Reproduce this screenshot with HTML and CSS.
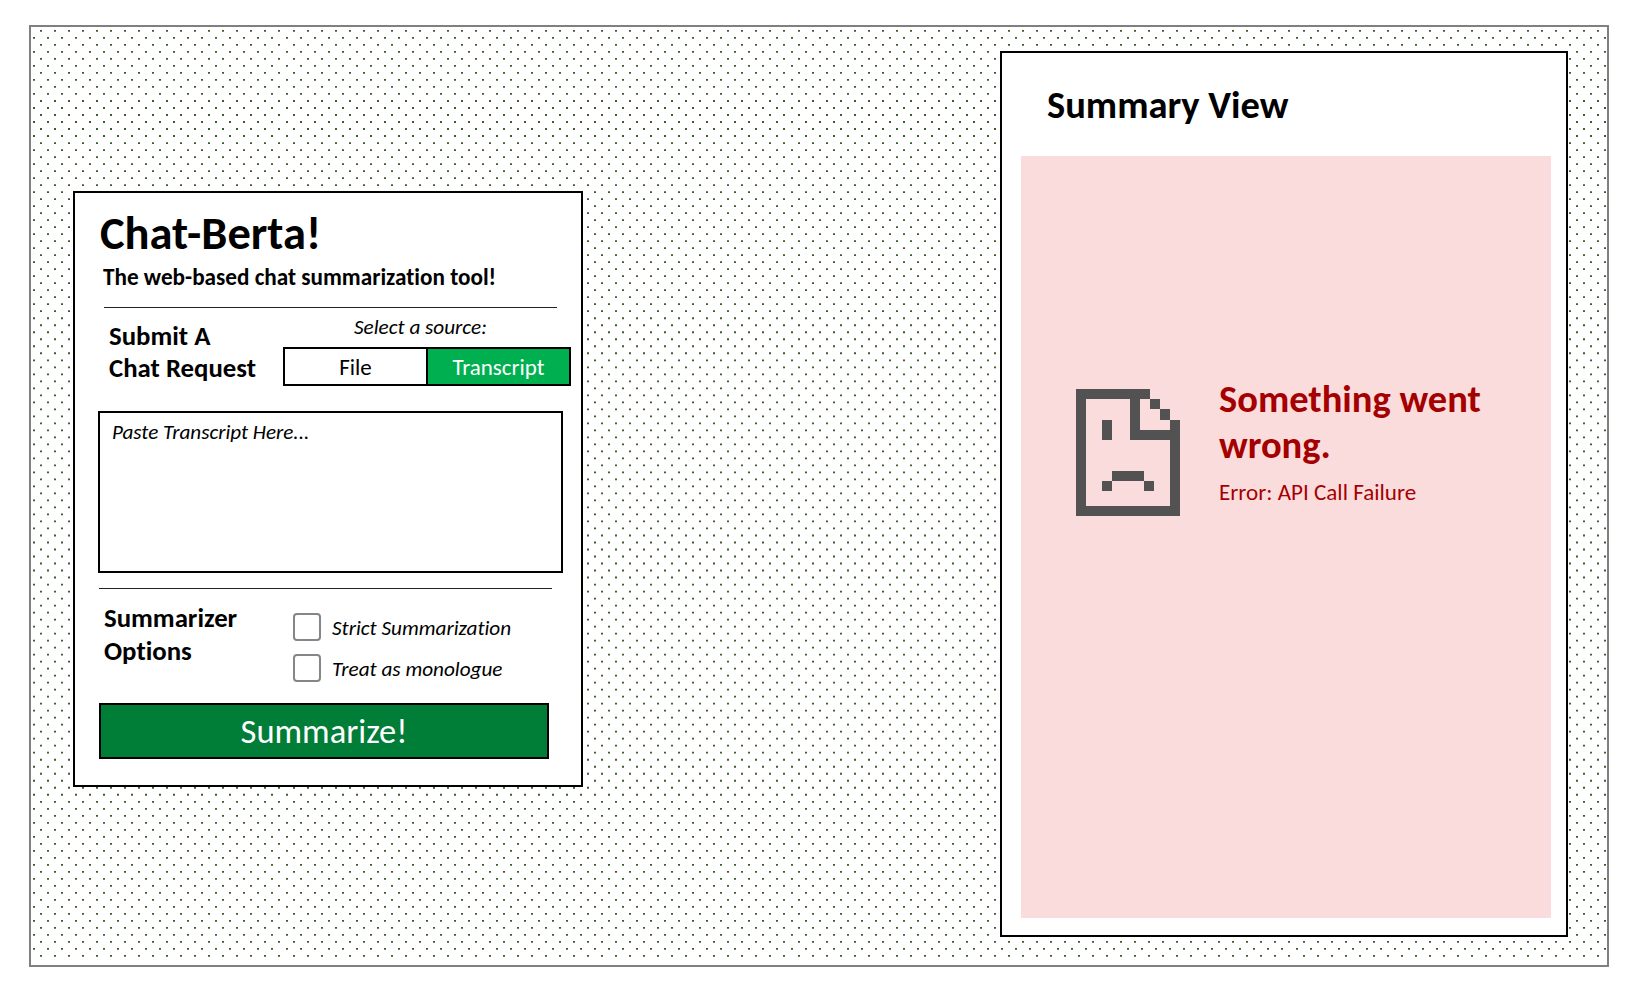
FILE: index.html
```
<!DOCTYPE html>
<html lang="en"><head><meta charset="utf-8"><title>Chat-Berta!</title><link rel="stylesheet" href="styles.css"></head>
<body>
<main class="frame">
<svg class="dots" aria-hidden="true"><path id="dots" fill="#3f5c30"/></svg>
<section class="card request">
<h1 class="title"><span>Chat-Berta!</span></h1>
<p class="tagline">The web-based chat summarization tool!</p>
<hr class="rule rule-top">
<div class="source">
<h2 class="heading">Submit A<br>Chat Request</h2>
<div class="picker"><p class="picker-label">Select a source:</p>
<div class="tabs"><button class="tab">File</button><button class="tab active">Transcript</button></div></div>
</div>
<div class="transcript">Paste Transcript Here...</div>
<hr class="rule">
<div class="options"><h2 class="heading opt-heading">Summarizer<br>Options</h2>
<div class="checks"><label class="check"><span class="box"></span><span class="check-text">Strict Summarization</span></label><label class="check"><span class="box"></span><span class="check-text">Treat as monologue</span></label></div></div>
<button class="submit">Summarize!</button>
</section>
<section class="card summary">
<h2 class="summary-title">Summary View</h2>
<div class="error">
<svg class="sad" viewBox="0 0 105 127" fill="#525252"><path d="M0 0H74V10H64V41H94V31H104V127H0ZM10 10V117H94V51H54V10Z" fill-rule="evenodd"/><path d="M74 10h10v10H74zM84 20h10v11H84zM26 31h10v20H26zM36 82h32v10H36zM26 92h10v10H26zM68 92h10v10H68z"/></svg>
<div class="message"><h3 class="error-title">Something went<br>wrong.</h3><p class="error-text">Error: API Call Failure</p></div>
</div>
</section>
</main>
<script src="dots.js"></script>
</body></html>
```
FILE: dots.js
```
// Staggered dot grid behind the cards.
let d = "";
for (let row = 0; row < 133; row++) {
  const y = (3 + row * 7.008).toFixed(2);
  const start = row % 2 ? 2 : 9;
  for (let x = start; x < 1575; x += 14.028) {
    d += `M${Math.round(x)} ${y}h2v1.8h-2z`;
  }
}
document.getElementById("dots").setAttribute("d", d);
```
FILE: styles.css
```
* { box-sizing: border-box; margin: 0; }
body { padding: 25px 19px 27px 29px; background: #fff; color: #000; font-family: Carlito, Calibri, Lato, sans-serif; font-variant-ligatures: none; }
.frame { position: relative; display: flex; justify-content: space-between; align-items: flex-start; height: 942px; border: 2px solid #808080; padding: 24px 39px 0 42px; }
.dots { position: absolute; inset: 0; width: 100%; height: 100%; }
.card { position: relative; background: #fff; border: 2px solid #000; }
.request { width: 510px; height: 596px; margin-top: 140px; padding: 18px 0 0 24px; }
.title { margin-left: 1px; font-size: 46.5px; line-height: 44px; white-space: nowrap; }
.tagline { margin: 8px 0 0 4px; font-size: 23.2px; line-height: 28px; font-weight: 700; white-space: nowrap; }
.rule { width: 453px; height: 1px; border: 0; background: #222; }
.rule-top { margin: 16px 0 0 5px; }
.source { display: flex; justify-content: space-between; padding: 5px 10px 0 10px; height: 103px; }
.heading { font-size: 26.8px; line-height: 32px; padding-top: 7px; white-space: nowrap; }
.picker { width: 288px; }
.picker-label { margin-left: 71px; font-size: 21.2px; line-height: 29px; font-style: italic; white-space: nowrap; }
.tabs { display: flex; margin-top: 5px; height: 39px; border: 2px solid #000; }
.tab { flex: 1; border: 0; padding: 0; background: #fff; color: #000; font: 23px Carlito, Calibri, Lato, sans-serif; font-variant-ligatures: none; }
.active { border-left: 2px solid #000; background: #00b050; color: #fff; }
.transcript { width: 465px; height: 162px; margin: 0 0 15px -1px; border: 2px solid #000; padding: 7px 12px; font-size: 21.1px; line-height: 24px; font-style: italic; }
.options { display: flex; padding: 4px 0 0 5px; height: 114px; }
.opt-heading { width: 189px; padding-top: 8px; line-height: 33px; }
.checks { display: grid; align-content: start; gap: 13px; padding-top: 20px; }
.check { display: flex; align-items: center; gap: 11px; height: 28px; font-size: 21.2px; font-style: italic; white-space: nowrap; }
.check-text { padding-top: 2px; }
.box { width: 28px; height: 28px; border: 2px solid #85858a; border-radius: 4px; }
.submit { width: 450px; height: 56px; border: 2px solid #000; background: #007d37; color: #fff; font: 34.5px Carlito, Calibri, Lato, sans-serif; font-variant-ligatures: none; }
.summary { width: 568px; height: 886px; padding: 29px 15px 17px 19px; }
.summary-title { margin-left: 26px; font-size: 38.5px; line-height: 45px; height: 74px; white-space: nowrap; }
.error { display: flex; height: 762px; background: #fbdcdd; padding: 233px 0 0 55px; }
.sad { width: 105px; height: 127px; flex: none; }
.message { margin: -13px 0 0 38px; color: #a50000; white-space: nowrap; }
.error-title { font-size: 38.5px; line-height: 46px; }
.error-text { margin-top: 10px; font-size: 23.1px; line-height: 28px; }
```
